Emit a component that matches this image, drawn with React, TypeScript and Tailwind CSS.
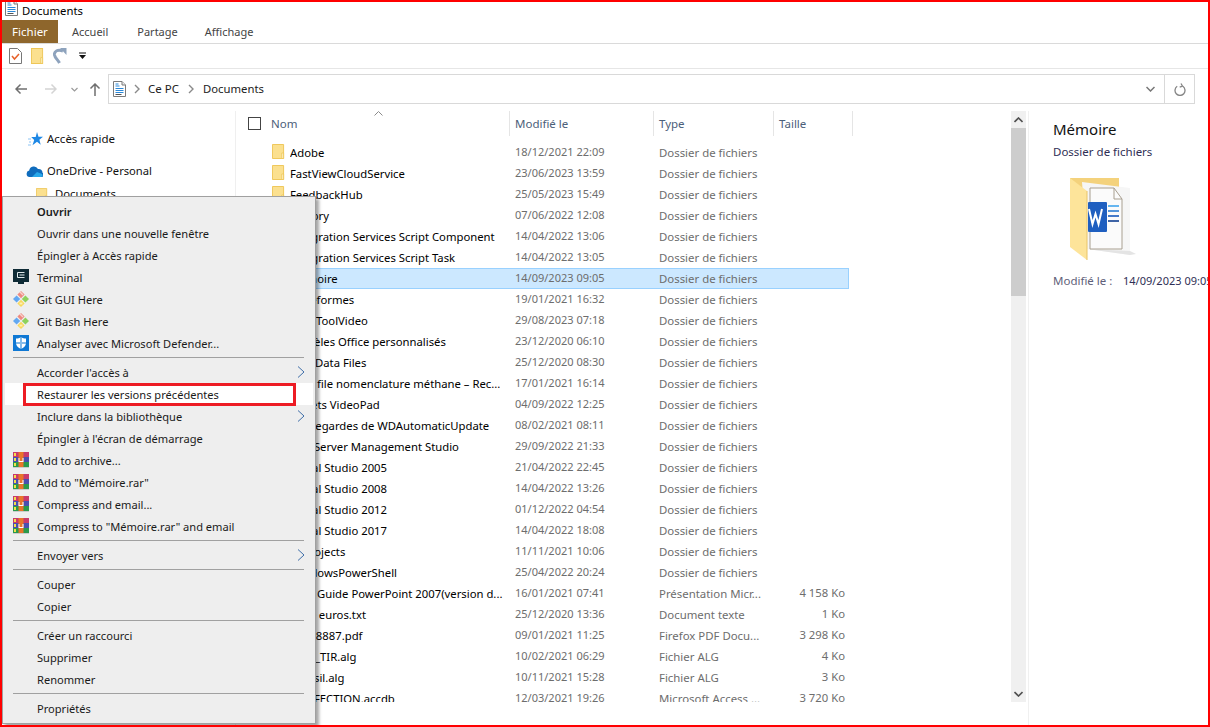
import React from "react";

const Chevron = ({ className = "", d = "M1 1l4 4-4 4" }: { className?: string; d?: string }) => (
  <svg className={className} width="8" height="10" viewBox="0 0 8 10" fill="none" stroke="currentColor" strokeWidth="1.4">
    <path d={d} />
  </svg>
);

const Folder = ({ w = 14, h = 15 }: { w?: number; h?: number }) => (
  <svg width={w} height={h} viewBox="0 0 14 15" className="shrink-0" preserveAspectRatio="none">
    <path d="M.5.5h12v14H.5z" fill="#fbe08f" stroke="#eec657" />
    <path d="M10.5 9v5.500h2V9z" fill="#fdf0c4" stroke="#eec657" strokeWidth=".8" />
  </svg>
);

const DocIcon = ({ className = "" }: { className?: string }) => (
  <svg className={className} width="13" height="16" viewBox="0 0 13 16">
    <path d="M.5.5h8.500l3.500 3.500v11.500H.5z" fill="#fff" stroke="#7b7b7b" />
    <path d="M9 .5V4h3.500" fill="#eee" stroke="#7b7b7b" />
    <path d="M2.500 3h3M2.500 5h4M2.500 7.500h8M2.500 9.500h8M2.500 11.500h8" stroke="#2b88d8" strokeWidth="1" />
    <path d="M2.500 13.500h6" stroke="#555" strokeWidth="1" />
  </svg>
);

const Terminal = () => (
  <svg width="16" height="16" viewBox="0 0 16 16">
    <rect x="0" y="0" width="16" height="13" fill="#0e2a35" />
    <rect x="5" y="13" width="6" height="2" fill="#0e2a35" />
    <path d="M4.500 3.500h7M4.500 3.500v5h7M6.500 6h5" stroke="#dfe9ec" fill="none" strokeWidth="1" />
  </svg>
);

const Git = () => (
  <svg width="16" height="16" viewBox="0 0 16 16">
    <path d="M8 0l3.600 3.600L8 7.200 4.400 3.600z" fill="#ee8a80" />
    <path d="M6.500 1.500l1-1 3 3-1 1z" fill="#fff" opacity=".6" />
    <path d="M0 8l3.600-3.600L7.200 8l-3.600 3.600z" fill="#62a8f2" />
    <path d="M8.800 8l3.600-3.600L16 8l-3.600 3.600z" fill="#8ed25c" />
    <path d="M4.400 12.400L8 8.800l3.600 3.600L8 16z" fill="#f8d858" />
    <path d="M6.500 11.500h3v2h-3z" fill="#fdeeb0" />
  </svg>
);

const Defender = () => (
  <svg width="16" height="16" viewBox="0 0 16 16">
    <rect width="16" height="16" fill="#0f78d4" />
    <path d="M3 3.500c2 0 3.500-.5 5-1.500 1.500 1 3 1.500 5 1.500v4.500c0 3-2.500 5-5 6-2.500-1-5-3-5-6z" fill="#fff" />
    <path d="M7.500 2v12.500h1V2zM3 7.500h10v1H3z" fill="#0f78d4" />
  </svg>
);

const Rar = () => (
  <svg width="16" height="16" viewBox="0 0 16 16">
    <rect x="0" y="0" width="16" height="5" fill="#c93a6c" />
    <rect x="0" y="5" width="16" height="5" fill="#4a4fb0" />
    <rect x="0" y="10" width="16" height="5" fill="#2a9a4c" />
    <rect x="5.500" y="0" width="5" height="15" fill="#e8752a" />
    <rect x="1" y="1" width="2" height="3" fill="#f4e04a" />
    <rect x="1" y="6" width="2" height="3" fill="#f4e04a" />
    <rect x="1" y="11" width="2" height="3" fill="#f4e04a" />
    <path d="M5.500 6h1v3h3V6h1v4h-5z" fill="#fff" />
    <rect x="0" y="15" width="16" height="1" fill="#ccc" />
  </svg>
);

const WordFolder = () => (
  <svg width="72" height="86" viewBox="0 0 72 86">
    <path d="M1 0h49v60H1z" fill="#f4d27c" />
    <path d="M13 4l48 6v67l-43-6z" fill="#f6f6f6" />
    <path d="M18 71l43 6 6-1-6-3z" fill="#e4e4e4" />
    <path d="M21 10h24l8 11v50H21z" fill="#fbfbfb" stroke="#a89f90" strokeWidth="1" />
    <path d="M45 10v11h8" fill="none" stroke="#a89f90" strokeWidth="1" />
    <path d="M1 0l17 13v69L1 69z" fill="#fde49a" />
    <path d="M18 13v69" stroke="#e8c468" strokeWidth="1" />
    <rect x="19" y="24" width="19" height="30" rx="1" fill="#1f5fc0" />
    <path d="M20 31l3.500 15 3-10 3 10 3.500-15" fill="none" stroke="#fff" strokeWidth="2" />
    <path d="M39 28h11" stroke="#41a5ee" strokeWidth="1.600" />
    <path d="M39 33h11" stroke="#2b7cd3" strokeWidth="1.600" />
    <path d="M39 38h11" stroke="#185abd" strokeWidth="1.600" />
    <path d="M39 43h11" stroke="#103f91" strokeWidth="1.600" />
  </svg>
);

const files: [string, string, string, string][] = [
  ["Adobe", "18/12/2021 22:09", "Dossier de fichiers", ""],
  ["FastViewCloudService", "23/06/2023 13:59", "Dossier de fichiers", ""],
  ["FeedbackHub", "25/05/2023 15:49", "Dossier de fichiers", ""],
  ["Factory", "07/06/2022 12:08", "Dossier de fichiers", ""],
  ["Integration Services Script Component", "14/04/2022 13:06", "Dossier de fichiers", ""],
  ["Integration Services Script Task", "14/04/2022 13:05", "Dossier de fichiers", ""],
  ["Mémoire", "14/09/2023 09:05", "Dossier de fichiers", ""],
  ["Plateformes", "19/01/2021 16:32", "Dossier de fichiers", ""],
  ["TubeToolVideo", "29/08/2023 07:18", "Dossier de fichiers", ""],
  ["Modèles Office personnalisés", "23/12/2020 06:10", "Dossier de fichiers", ""],
  ["Mes Data Files", "25/12/2020 08:30", "Dossier de fichiers", ""],
  ["Mon file nomenclature méthane – Rec...", "17/01/2021 16:14", "Dossier de fichiers", ""],
  ["Projets VideoPad", "04/09/2022 12:25", "Dossier de fichiers", ""],
  ["Sauvegardes de WDAutomaticUpdate", "08/02/2021 08:11", "Dossier de fichiers", ""],
  ["SQL Server Management Studio", "29/09/2022 21:33", "Dossier de fichiers", ""],
  ["Visual Studio 2005", "21/04/2022 22:45", "Dossier de fichiers", ""],
  ["Visual Studio 2008", "14/04/2022 13:26", "Dossier de fichiers", ""],
  ["Visual Studio 2012", "01/12/2022 04:54", "Dossier de fichiers", ""],
  ["Visual Studio 2017", "14/04/2022 18:08", "Dossier de fichiers", ""],
  ["VSProjects", "11/11/2021 10:06", "Dossier de fichiers", ""],
  ["WindowsPowerShell", "25/04/2022 20:24", "Dossier de fichiers", ""],
  ["Mon Guide PowerPoint 2007(version d...", "16/01/2021 07:41", "Présentation Micr...", "4 158 Ko"],
  ["1000 euros.txt", "25/12/2020 13:36", "Document texte", "1 Ko"],
  ["10028887.pdf", "09/01/2021 11:25", "Firefox PDF Docu...", "3 298 Ko"],
  ["Data_TIR.alg", "10/02/2021 06:29", "Fichier ALG", "4 Ko"],
  ["Ebrasil.alg", "10/11/2021 15:28", "Fichier ALG", "3 Ko"],
  ["2_INFECTION.accdb", "12/03/2021 19:26", "Microsoft Access ...", "3 720 Ko"],
];

type Item = { t: string; icon?: React.ReactNode; bold?: boolean; sub?: boolean; hl?: boolean } | "sep";

const menu: Item[] = [
  { t: "Ouvrir", bold: true },
  { t: "Ouvrir dans une nouvelle fenêtre" },
  { t: "Épingler à Accès rapide" },
  { t: "Terminal", icon: <Terminal /> },
  { t: "Git GUI Here", icon: <Git /> },
  { t: "Git Bash Here", icon: <Git /> },
  { t: "Analyser avec Microsoft Defender...", icon: <Defender /> },
  "sep",
  { t: "Accorder l'accès à", sub: true },
  { t: "Restaurer les versions précédentes", hl: true },
  { t: "Inclure dans la bibliothèque", sub: true },
  { t: "Épingler à l'écran de démarrage" },
  { t: "Add to archive...", icon: <Rar /> },
  { t: 'Add to "Mémoire.rar"', icon: <Rar /> },
  { t: "Compress and email...", icon: <Rar /> },
  { t: 'Compress to "Mémoire.rar" and email', icon: <Rar /> },
  "sep",
  { t: "Envoyer vers", sub: true },
  "sep",
  { t: "Couper" },
  { t: "Copier" },
  "sep",
  { t: "Créer un raccourci" },
  { t: "Supprimer" },
  { t: "Renommer" },
  "sep",
  { t: "Propriétés" },
];

export default function App() {
  return (
    <div className="relative flex h-[727px] w-[1210px] flex-col overflow-hidden border-2 border-[#ff0000] bg-white font-['Noto_Sans',sans-serif] text-[11.5px] text-black">
      {/* title bar */}
      <div className="flex h-[18px] items-center overflow-hidden pl-[3px]">
        <DocIcon className="-mt-[6px]" />
        <span className="ml-[4px] text-[11.3px]">Documents</span>
      </div>
      {/* tabs */}
      <div className="flex h-[24px] border-b border-[#dadada] text-[11px] text-[#444]">
        <div className="flex w-[56px] items-center justify-center bg-[#8e662c] text-[11.5px] text-white">Fichier</div>
        <span className="ml-[14px] flex items-center pt-[2px]">Accueil</span>
        <span className="ml-[29px] flex items-center pt-[2px]">Partage</span>
        <span className="ml-[27px] flex items-center pt-[2px]">Affichage</span>
      </div>
      {/* quick access */}
      <div className="flex h-[25px] items-center border-b border-[#e6e6e6] pl-[7px]">
        <svg width="13" height="16" viewBox="0 0 13 16">
          <path d="M.5.5h8l4 4v11H.5z" fill="#fff" stroke="#777" />
          <path d="M3 8l2.500 3L10 6" fill="none" stroke="#e8622a" strokeWidth="1.500" />
        </svg>
        <div className="ml-[9px]"><Folder w={13} h={16} /></div>
        <svg className="ml-[9px]" width="14" height="16" viewBox="0 0 14 16">
          <path d="M10 3C5 1 1 3 1.500 7 2 10 5 12 6.500 15" fill="none" stroke="#8ea3bd" strokeWidth="3" />
          <path d="M7 0h6.500v7z" fill="#8ea3bd" />
        </svg>
        <svg className="ml-[12px]" width="8" height="8" viewBox="0 0 8 8">
          <path d="M0 1h7" stroke="#111" strokeWidth="1" />
          <path d="M0 3h7L3.500 7z" fill="#111" />
        </svg>
      </div>
      {/* address row */}
      <div className="flex h-[42px] items-center pb-[2px]">
        <svg className="ml-[13px]" width="12" height="12" viewBox="0 0 12 12" fill="none" stroke="#6f6f6f" strokeWidth="1.500">
          <path d="M12 6H1M5.500 1.500L1 6l4.500 4.500" />
        </svg>
        <svg className="ml-[18px]" width="12" height="12" viewBox="0 0 12 12" fill="none" stroke="#d4d4d4" strokeWidth="1.500">
          <path d="M0 6h11M6.500 1.500L11 6l-4.500 4.500" />
        </svg>
        <svg className="ml-[14px]" width="7" height="5" viewBox="0 0 7 5" fill="none" stroke="#9a9a9a" strokeWidth="1.200">
          <path d="M.5 1L3.500 4l3-3" />
        </svg>
        <svg className="ml-[11px]" width="12" height="13" viewBox="0 0 12 13" fill="none" stroke="#6f6f6f" strokeWidth="1.500">
          <path d="M6 13V1M1.500 5.500L6 1l4.500 4.500" />
        </svg>
        <div className="ml-[7px] flex h-[30px] w-[1087px] items-center border border-[#d9d9d9]">
          <DocIcon className="ml-[4px]" />
          <Chevron className="ml-[8px] text-[#8a8a8a]" />
          <span className="ml-[6px] text-[#222]">Ce PC</span>
          <Chevron className="ml-[9px] text-[#8a8a8a]" />
          <span className="ml-[7px] text-[11.3px] text-[#222]">Documents</span>
          <svg className="ml-auto mr-[9px]" width="9" height="6" viewBox="0 0 9 6" fill="none" stroke="#777" strokeWidth="1.500">
            <path d="M.5 1L4.500 5l4-4" />
          </svg>
          <div className="flex h-full w-[30px] items-center justify-center border-l border-[#d9d9d9]">
            <svg width="12" height="13" viewBox="0 0 12 13" fill="none" stroke="#858585" strokeWidth="1.300">
              <path d="M8.800 3.300a5 5 0 1 1-5.600 0" />
              <path d="M4.500 .5L6 3.200 3.200 4.200" transform="translate(2.500 0)" />
            </svg>
          </div>
        </div>
      </div>
      {/* main */}
      <div className="flex min-h-0 flex-1">
        {/* nav */}
        <div className="flex w-[234px] shrink-0 flex-col border-r border-[#efefef] pt-[17px] text-[#111]">
          <div className="flex h-[22px] items-center pl-[26px]">
            <svg width="15" height="15" viewBox="0 0 15 15">
              <path d="M9 0l1.500 4.800H15l-3.600 3 1.300 5-3.700-3-4.500 3.500 1.700-5.300-3-2.900h4.500z" fill="#1e88e5" />
              <path d="M0 7h3M1 10h2M0 13h3" stroke="#8cc4f4" strokeWidth="1" />
            </svg>
            <span className="ml-[4px]">Accès rapide</span>
          </div>
          <div className="mt-[10px] flex h-[22px] items-center pl-[24px]">
            <svg width="17" height="11" viewBox="0 0 17 11">
              <path d="M3.500 11a3.300 3.300 0 0 1-.3-6.500 4.700 4.700 0 0 1 8.800-1.500 3.700 3.700 0 0 1 4.500 3.700 2.300 2.300 0 0 1-.5 4.300z" fill="#0f6cbd" />
              <path d="M6 11l5-5 5 2a2 2 0 0 1-1 3z" fill="#28a8ea" />
            </svg>
            <span className="ml-[4px] text-[11.2px]">OneDrive - Personal</span>
          </div>
          <div className="mt-[1px] flex h-[22px] items-center pl-[34px]">
            <Folder w={12} h={13} />
            <span className="ml-[7px] text-[11.3px]">Documents</span>
          </div>
        </div>
        {/* list */}
        <div className="flex h-[591px] w-[775px] shrink-0 flex-col">
          <div className="relative flex h-[25px] shrink-0 items-center text-[#4c607a]">
            <div className="ml-[12px] h-[13px] w-[13px] border border-[#444]" />
            <span className="ml-[10px] w-[238px]">Nom</span>
            <svg className="absolute left-[138px] top-0" width="9" height="5" viewBox="0 0 9 5" fill="none" stroke="#8a8a8a">
              <path d="M.5 4.500l4-4 4 4" />
            </svg>
            <div className="flex h-full w-[144px] items-center border-l border-[#e5e5e5] pl-[5px]">Modifié le</div>
            <div className="flex h-full w-[120px] items-center border-l border-[#e5e5e5] pl-[5px]">Type</div>
            <div className="flex h-full w-[80px] items-center border-x border-[#e5e5e5] pl-[5px]">Taille</div>
          </div>
          <div className="mt-[6px] min-h-0 flex-1 overflow-hidden">
            {files.map(([n, d, t, s]) => {
              const sel = n === "Mémoire";
              return (
                <div
                  key={n}
                  className={`ml-[26px] flex h-[21px] w-[587px] items-center border ${sel ? "border-[#99d1ff] bg-[#cce8ff]" : "border-transparent"}`}
                >
                  <div className="ml-[9px] -mt-[2px]"><Folder w={13} h={15} /></div>
                  <span className="ml-[5px] w-[225px] truncate pt-[2px] text-[11.3px]">{n}</span>
                  <span className="w-[144px] text-[11px] text-[#6d6d6d]">{d}</span>
                  <span className="w-[120px] truncate text-[11.4px] text-[#6d6d6d]">{t}</span>
                  <span className="w-[66px] text-right text-[11.3px] text-[#6d6d6d]">{s}</span>
                </div>
              );
            })}
          </div>
        </div>
        {/* scrollbar */}
        <div className="flex h-[591px] w-[15px] shrink-0 flex-col bg-[#f0f0f0]">
          <div className="flex h-[17px] items-center justify-center">
            <svg width="9" height="6" viewBox="0 0 9 6" fill="none" stroke="#505050" strokeWidth="1.600">
              <path d="M.5 5l4-4 4 4" />
            </svg>
          </div>
          <div className="h-[168px] bg-[#cdcdcd]" />
          <div className="flex-1" />
          <div className="flex h-[17px] items-center justify-center">
            <svg width="9" height="6" viewBox="0 0 9 6" fill="none" stroke="#505050" strokeWidth="1.600">
              <path d="M.5 1l4 4 4-4" />
            </svg>
          </div>
        </div>
        {/* details */}
        <div className="ml-[2px] min-w-0 flex-1 overflow-hidden whitespace-nowrap border-l border-[#f0f0f0] pl-[24px] pt-[7px]">
          <div className="text-[15px] leading-[22px] text-[#111]">Mémoire</div>
          <div className="mt-[3px] leading-[18px] text-[#2f2f55]">Dossier de fichiers</div>
          <div className="ml-[16px] mt-[17px]"><WordFolder /></div>
          <div className="mt-[8px] flex leading-[18px]">
            <span className="w-[70px] shrink-0 text-[#5f5f7a]">Modifié le :</span>
            <span className="shrink-0 text-[11px] text-[#2f2f55]">14/09/2023 09:05</span>
          </div>
        </div>
      </div>
      {/* context menu */}
      <div className="absolute left-0 top-[194px] flex h-[528px] w-[314px] flex-col border border-[#a0a0a0] bg-[#eeeeee] px-[2px] py-[3px] text-[11.1px] text-[#1a1a1a] shadow-[3px_3px_3px_rgba(0,0,0,0.35)]">
        {menu.map((m, i) =>
          m === "sep" ? (
            <div key={i} className="flex h-[7px] shrink-0 items-center pl-[8px] pr-[9px]">
              <div className="h-px w-full bg-[#a0a0a0]" />
            </div>
          ) : (
            <div key={i} className={`relative flex h-[22px] shrink-0 items-center ${m.hl ? "bg-white" : ""}`}>
              <div className="flex w-[32px] shrink-0 justify-end">
                <div className="mr-[8px] flex w-[16px] justify-center">{m.icon}</div>
              </div>
              <span className={`pt-[2px] ${m.bold ? "font-semibold" : ""}`}>{m.t}</span>
              {m.sub && (
                <svg className="absolute right-[8px] top-[5px]" width="8" height="12" viewBox="0 0 8 12" fill="none" stroke="#3f6ea8" strokeWidth="1">
                  <path d="M1 .5l6 5.500-6 5.500" />
                </svg>
              )}
              {m.hl && <div className="absolute left-[18px] top-0 h-[23px] w-[273px] border-[3px] border-[#ed1c24]" />}
            </div>
          )
        )}
      </div>
    </div>
  );
}
